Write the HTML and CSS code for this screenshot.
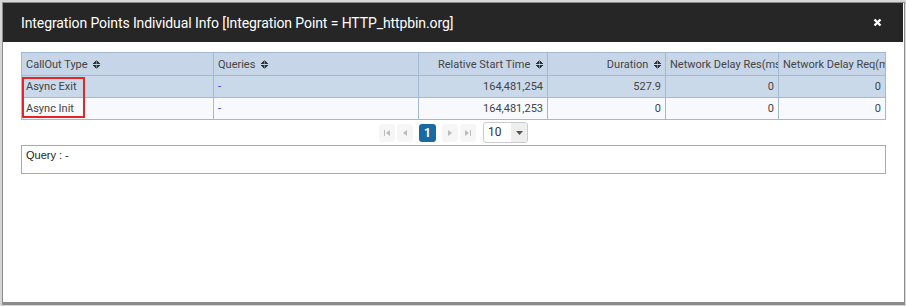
FILE: index.html
```html
<!DOCTYPE html>
<html lang="en">
<head>
    <meta charset="UTF-8">
    <title>Integration Points Individual Info</title>
    <link rel="stylesheet" href="styles.css">
</head>
<body>
    <div class="dialog">
        <div class="dialog-head">
            <span class="title">Integration Points Individual Info [Integration Point = HTTP_httpbin.org]</span>
            <span class="close">
                <svg width="9" height="9" viewBox="0 0 9 9"><path d="M1.5 1.5L7.5 7.5M7.5 1.5L1.5 7.5" stroke="#fff" stroke-width="2.4"/></svg>
            </span>
        </div>
        <div class="dialog-body">
            <div class="grid-wrap">
                <table class="grid">
                    <colgroup>
                        <col style="width:192px">
                        <col style="width:205px">
                        <col style="width:129px">
                        <col style="width:118px">
                        <col style="width:113px">
                        <col style="width:107px">
                    </colgroup>
                    <thead>
                        <tr>
                            <th>CallOut Type <span class="sort"></span></th>
                            <th>Queries <span class="sort"></span></th>
                            <th class="num">Relative Start Time <span class="sort"></span></th>
                            <th class="num">Duration <span class="sort"></span></th>
                            <th class="clip">Network Delay Res(ms)</th>
                            <th class="clip">Network Delay Req(ms)</th>
                        </tr>
                    </thead>
                    <tbody>
                        <tr class="selected">
                            <td>Async Exit</td>
                            <td class="link">-</td>
                            <td class="num">164,481,254</td>
                            <td class="num">527.9</td>
                            <td class="num">0</td>
                            <td class="num">0</td>
                        </tr>
                        <tr>
                            <td>Async Init</td>
                            <td class="link">-</td>
                            <td class="num">164,481,253</td>
                            <td class="num">0</td>
                            <td class="num">0</td>
                            <td class="num">0</td>
                        </tr>
                    </tbody>
                </table>
                <div class="mark"></div>
            </div>

            <div class="pager">
                <span class="pg-btn"><svg width="6" height="6" viewBox="0 0 6 6"><path d="M0.5 0V6" stroke="#bbb"/><path d="M6 0V6L2 3Z" fill="#bbb"/></svg></span>
                <span class="pg-btn"><svg width="4" height="6" viewBox="0 0 4 6"><path d="M4 0V6L0 3Z" fill="#bbb"/></svg></span>
                <span class="pg-current">1</span>
                <span class="pg-btn"><svg width="4" height="6" viewBox="0 0 4 6"><path d="M0 0V6L4 3Z" fill="#bbb"/></svg></span>
                <span class="pg-btn"><svg width="6" height="6" viewBox="0 0 6 6"><path d="M0 0V6L4 3Z" fill="#bbb"/><path d="M5.5 0V6" stroke="#bbb"/></svg></span>
                <span class="pg-size">
                    <span class="pg-value">10</span>
                    <span class="pg-arrow"><svg width="7" height="4" viewBox="0 0 7 4"><path d="M0 0H7L3.5 4Z" fill="#555"/></svg></span>
                </span>
            </div>

            <div class="query">Query : -</div>
        </div>
    </div>
</body>
</html>
```

FILE: styles.css
```css
html, body {
    margin: 0;
    padding: 0;
}
body {
    background: #d6d6d6;
    width: 906px;
    height: 306px;
    overflow: hidden;
    font-family: Roboto, "Liberation Sans", sans-serif;
}
.dialog {
    margin: 2px 1px 0 2px;
    height: 299px;
    background: #fff;
    border: 1px solid #8c8c8c;
    border-bottom-width: 3px;
    padding-right: 1px;
}
.dialog-head {
    height: 39px;
    background: #262626;
    display: flex;
    align-items: center;
    justify-content: space-between;
    padding: 0 21px 0 18px;
}
.title {
    color: #fff;
    font-size: 14px;
    letter-spacing: -0.1px;
}
.close {
    display: flex;
    margin-top: -1px;
}
.dialog-body {
    padding: 10px 16px 0 18px;
}
.grid-wrap {
    position: relative;
    width: 865px;
}
.grid {
    width: 865px;
    table-layout: fixed;
    border-collapse: collapse;
    font-size: 11px;
    color: #444;
}
.grid th, .grid td {
    border: 1px solid #a3b8d1;
    padding: 0 4px;
    white-space: nowrap;
    overflow: hidden;
    text-align: left;
}
.grid th {
    background: #c6d6e8;
    font-weight: normal;
    height: 22px;
}
.grid th.clip {
    text-overflow: clip;
    padding-right: 0;
}
.grid td {
    height: 21px;
    background: #f7f9fc;
}
.grid tr.selected td {
    background: #cad9ea;
}
.grid .num {
    text-align: right;
}
.grid td.link {
    color: #1836f0;
}
.sort {
    display: inline-block;
    width: 7px;
    height: 9px;
    margin-left: 3px;
    vertical-align: -1px;
    background:
        linear-gradient(to bottom right, transparent 50%, #333 50%) 0 0 / 3.5px 4px no-repeat,
        linear-gradient(to bottom left, transparent 50%, #333 50%) 3.5px 0 / 3.5px 4px no-repeat,
        linear-gradient(to top right, transparent 50%, #333 50%) 0 5px / 3.5px 4px no-repeat,
        linear-gradient(to top left, transparent 50%, #333 50%) 3.5px 5px / 3.5px 4px no-repeat;
}
.mark {
    position: absolute;
    left: 1px;
    top: 25px;
    width: 59px;
    height: 37px;
    border: 2px solid #e52528;
}
.pager {
    display: flex;
    justify-content: center;
    align-items: center;
    gap: 2px;
    margin-top: 2px;
    width: 865px;
}
.pg-btn {
    width: 16px;
    height: 18px;
    background: #f6f6f6;
    border-radius: 3px;
    display: flex;
    align-items: center;
    justify-content: center;
}
.pg-current {
    width: 17px;
    height: 18px;
    margin: 0 4px;
    background: #1a6aa2;
    border-radius: 3px;
    color: #fff;
    font-weight: bold;
    font-size: 12px;
    display: flex;
    align-items: center;
    justify-content: center;
}
.pg-size {
    margin-left: 5px;
    width: 43px;
    height: 19px;
    border: 1px solid #ccc;
    border-radius: 3px;
    display: flex;
    font-size: 12px;
    color: #333;
    overflow: hidden;
}
.pg-value {
    flex: 1;
    padding-left: 4px;
    line-height: 18px;
}
.pg-arrow {
    width: 16px;
    background: #eee;
    display: flex;
    align-items: center;
    justify-content: center;
}
.query {
    margin-top: 2px;
    width: 855px;
    height: 21px;
    border: 1px solid #aaa;
    padding: 3px 4px;
    font-family: "Liberation Sans", Arial, sans-serif;
    font-size: 11px;
    color: #222;
}
```
